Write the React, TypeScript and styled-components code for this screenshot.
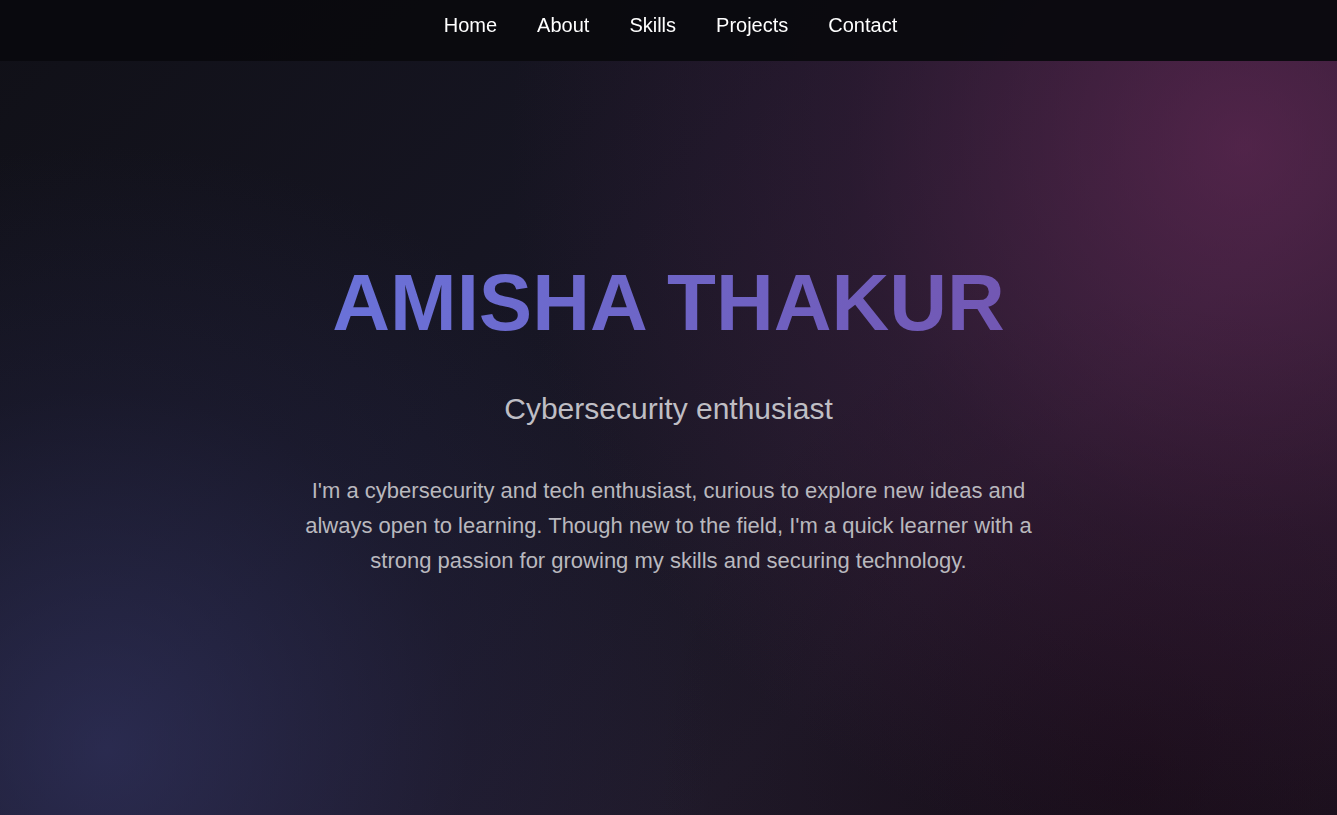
import React from 'react';
import styled, { createGlobalStyle } from 'styled-components';

const GlobalStyle = createGlobalStyle`
    * {
        box-sizing: border-box;
    }

    html, body {
        margin: 0;
        padding: 0;
    }

    body {
        font-family: "Liberation Sans", Arial, sans-serif;
        min-height: 100vh;
        color: #f2f2f2;
        background:
            radial-gradient(circle at 93% 18%, rgba(122, 45, 100, 0.55) 0%, rgba(90, 35, 80, 0.25) 28%, transparent 52%),
            radial-gradient(circle at 8% 92%, rgba(58, 60, 115, 0.55) 0%, rgba(45, 45, 90, 0.2) 25%, transparent 42%),
            radial-gradient(circle at 85% 95%, rgba(20, 8, 18, 0.6) 0%, transparent 35%),
            linear-gradient(135deg, #101017 0%, #171624 40%, #201a2a 70%, #1c1320 100%);
        background-attachment: fixed;
    }
`;

const NavBar = styled.nav`
    position: fixed;
    top: 0;
    left: 0;
    right: 0;
    height: 61px;
    background: rgba(10, 10, 14, 0.95);
    z-index: 10;
    display: flex;
    justify-content: center;
    padding: 13px 0 0 4px;
`;

const NavList = styled.ul`
    list-style: none;
    margin: 0;
    padding: 0;
    display: flex;
    gap: 40px;
    height: 24px;
`;

const NavLink = styled.a`
    color: #ffffff;
    text-decoration: none;
    font-size: 20px;
    line-height: 24px;
    cursor: pointer;

    &:hover {
        color: #8f8cf0;
    }
`;

const Hero = styled.section`
    min-height: 100vh;
    display: flex;
    flex-direction: column;
    align-items: center;
    justify-content: center;
    text-align: center;
    padding: 22px 20px 0;
`;

const Name = styled.h1`
    margin: 0;
    width: 100%;
    font-size: 80px;
    font-weight: 700;
    line-height: 88px;
    background: linear-gradient(90deg, #667eea 0%, #764ba2 100%);
    -webkit-background-clip: text;
    background-clip: text;
    color: transparent;
`;

const Tagline = styled.h2`
    margin: 44px 0 0;
    font-size: 30px;
    font-weight: 400;
    line-height: 36px;
    color: #bfbec4;
`;

const Intro = styled.p`
    margin: 46px 0 0;
    max-width: 750px;
    font-size: 22px;
    line-height: 1.6;
    color: #b9b8be;
`;

const links = ['Home', 'About', 'Skills', 'Projects', 'Contact'];

const App = () => {
    return (
        <>
            <GlobalStyle />
            <NavBar>
                <NavList>
                    {links.map((link) => (
                        <li key={link}>
                            <NavLink href={`#${link.toLowerCase()}`}>{link}</NavLink>
                        </li>
                    ))}
                </NavList>
            </NavBar>

            <Hero id="home">
                <Name>AMISHA THAKUR</Name>
                <Tagline>Cybersecurity enthusiast</Tagline>
                <Intro>
                    I'm a cybersecurity and tech enthusiast, curious to explore new ideas and always open to
                    learning. Though new to the field, I'm a quick learner with a strong passion for growing my
                    skills and securing technology.
                </Intro>
            </Hero>
        </>
    );
};

export default App;
